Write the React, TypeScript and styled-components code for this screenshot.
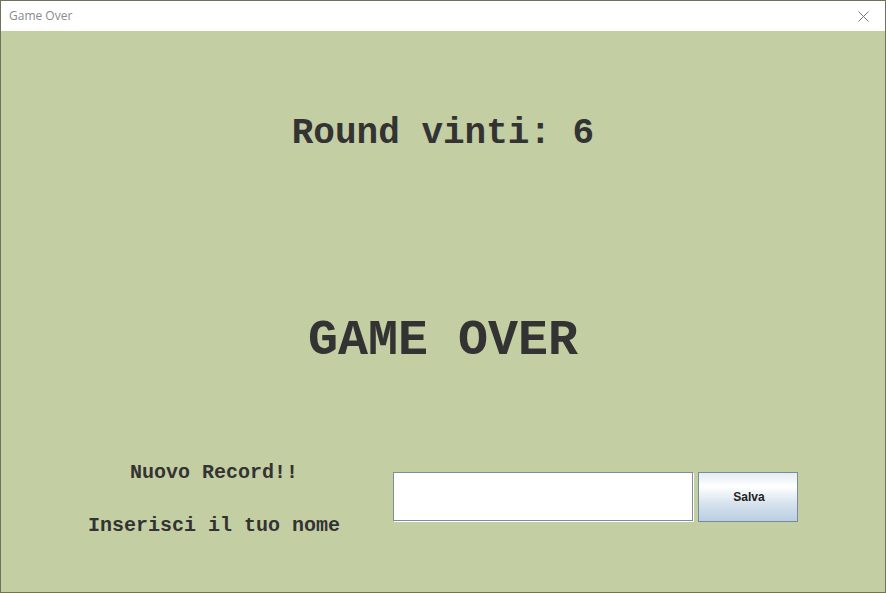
import React from "react";
import styled, { createGlobalStyle } from "styled-components";

const Global = createGlobalStyle`
  html, body { margin: 0; padding: 0; background: #c3cea2; }
  #root { width: 886px; height: 593px; }
`;

const Window = styled.div`
  box-sizing: border-box;
  width: 886px;
  height: 593px;
  border: 1px solid #6f7359;
  display: flex;
  flex-direction: column;
  background: #c3cea2;
`;

const TitleBar = styled.div`
  height: 30px;
  background: #ffffff;
  display: flex;
  align-items: center;
  justify-content: space-between;
  padding: 0 0 0 8px;
  font-family: "Open Sans", "Noto Sans", sans-serif;
  font-size: 12px;
  color: #8a8a8a;
`;

const Title = styled.span`
  margin-top: -1px;
`;

const CloseBox = styled.div`
  width: 46px;
  height: 30px;
  display: flex;
  align-items: center;
  justify-content: center;
  margin-right: -1px;
`;

const Content = styled.div`
  flex: 1;
  display: flex;
  flex-direction: column;
  align-items: stretch;
  font-family: "Liberation Mono", "Courier New", monospace;
  font-weight: bold;
  color: #333333;
`;

const Heading = styled.div<{ $size: number; $top: number }>`
  font-size: ${(p) => p.$size}px;
  line-height: 1;
  text-align: center;
  margin-top: ${(p) => p.$top}px;
  white-space: pre;
`;

const BottomRow = styled.div`
  display: flex;
  align-items: flex-start;
  margin-top: 97px;
`;

const LabelColumn = styled.div`
  box-sizing: border-box;
  width: 392px;
  padding-left: 34px;
  display: flex;
  flex-direction: column;
  align-items: center;
  gap: 33px;
`;

const Label = styled.div`
  font-size: 20px;
  line-height: 1;
  white-space: pre;
`;

const NameInput = styled.input`
  box-sizing: border-box;
  width: 300px;
  height: 49px;
  margin-top: 9px;
  border: 1px solid #7f8c9a;
  box-shadow: 1px 1px 0 #ffffff;
  background: #ffffff;
  outline: none;
  padding: 0 6px;
  font-family: "Liberation Sans", Arial, sans-serif;
  font-size: 14px;
`;

const SaveButton = styled.button`
  box-sizing: border-box;
  width: 100px;
  height: 50px;
  margin-top: 9px;
  margin-left: 5px;
  border: 1px solid #7a8a9a;
  background: linear-gradient(
    to bottom,
    #e3ebf4 0%,
    #ffffff 28%,
    #d9e4ef 62%,
    #b9cee3 100%
  );
  font-family: "Liberation Sans", Arial, sans-serif;
  font-weight: bold;
  font-size: 12px;
  color: #222222;
  padding: 0 0 0 2px;
  cursor: pointer;
`;

export default function App() {
  return (
    <>
      <Global />
      <Window>
        <TitleBar>
          <Title>Game Over</Title>
          <CloseBox>
            <svg width="11" height="11" viewBox="0 0 11 11">
              <path d="M0.5 0.5 L10.5 10.5 M10.5 0.5 L0.5 10.5" stroke="#777" strokeWidth="1" fill="none" />
            </svg>
          </CloseBox>
        </TitleBar>
        <Content>
          <Heading $size={36} $top={85}>Round vinti: 6</Heading>
          <Heading $size={50} $top={164}>GAME OVER</Heading>
          <BottomRow>
            <LabelColumn>
              <Label>Nuovo Record!!</Label>
              <Label>Inserisci il tuo nome</Label>
            </LabelColumn>
            <NameInput type="text" />
            <SaveButton>Salva</SaveButton>
          </BottomRow>
        </Content>
      </Window>
    </>
  );
}
